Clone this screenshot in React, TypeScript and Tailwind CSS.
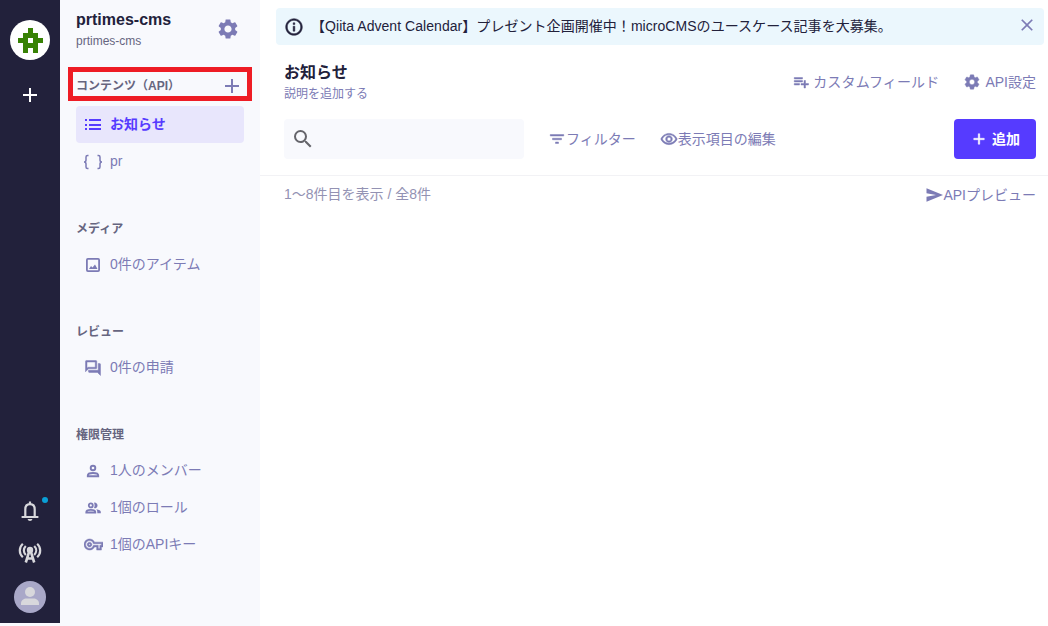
import type { ReactNode } from "react";
import type { IconType } from "react-icons";
import {
  MdAdd,
  MdClose,
  MdFilterList,
  MdInfoOutline,
  MdOutlineQuestionAnswer,
  MdOutlineRemoveRedEye,
  MdOutlineVpnKey,
  MdPlaylistAdd,
  MdSearch,
  MdSettings,
} from "react-icons/md";

type Item = { label: string; icon: ReactNode; active?: boolean };

// Material icons with a thin outline so they read a little heavier.
// Their invisible bounding path must not pick up the stroke.
const icon = (Icon: IconType, size = 18) => (
  <Icon size={size} strokeWidth={0.6} className="[&>path[fill=none]]:[stroke:none]" />
);

function ServiceLogo() {
  return (
    <svg width="26" height="26" viewBox="0 0 26 26" shapeRendering="crispEdges">
      <path
        fill="#388205"
        fillRule="evenodd"
        d="M11 1h5v5h5v5h5v5h-5v10h-5v-5h-5v5h-5v-10h-5v-5h5v-5h5zM11 11v5h5v-5z"
      />
    </svg>
  );
}

function BellIcon() {
  return (
    <svg width="18" height="20" viewBox="0 0 18 20" fill="none" stroke="currentColor" strokeWidth="2.200">
      <path d="M4.300 16V8.500C4.300 5.200 6.200 3.200 9 3.200S13.700 5.200 13.700 8.500V16" />
      <path d="M.6 16H17.400M9 .5V3.500" />
      <path d="M6.500 18h5Q11 20 9 20T6.500 18z" fill="currentColor" stroke="none" />
    </svg>
  );
}

function BroadcastIcon() {
  return (
    <svg width="24" height="22" viewBox="0 0 24 22" fill="none" stroke="currentColor">
      <path d="M4.800 1.800C.8 5.500.8 11.500 4.800 15.200M19.200 1.800C23.200 5.500 23.200 11.500 19.200 15.200" strokeWidth="2.200" />
      <path d="M7.800 4C5.200 6.600 5.200 10.400 7.800 13M16.200 4C18.800 6.600 18.800 10.400 16.200 13" strokeWidth="2.200" />
      <path d="M11.200 9.500L7.800 20.500M12.800 9.500L16.200 20.500M9 16.500h6" strokeWidth="2.600" />
      <circle cx="12" cy="8" r="3.200" fill="currentColor" stroke="none" />
    </svg>
  );
}

function AvatarIcon() {
  return (
    <svg width="32" height="32" viewBox="0 0 32 32" fill="currentColor">
      <circle cx="16" cy="11" r="5" />
      <path d="M7 24V22.500C7 19 10 17.500 12.500 17.500H19.500C22 17.500 25 19 25 22.500V24z" />
    </svg>
  );
}

function ListIcon() {
  return (
    <svg width="16" height="12" viewBox="0 0 16 12" fill="currentColor" shapeRendering="crispEdges">
      <path d="M0 0h2v2H0zM0 5h2v2H0zM0 9h2v2H0zM4 0h12v2H4zM4 5h12v2H4zM4 9h12v2H4z" />
    </svg>
  );
}

function BracesIcon() {
  return (
    <svg width="20" height="16" viewBox="0 0 20 16" fill="none" stroke="currentColor" strokeWidth="1.500">
      <path d="M5.500 1.500H4.500Q3 1.500 3 3V6Q3 8 1 8Q3 8 3 10V13Q3 14.500 4.500 14.500H5.500" />
      <path d="M14.500 1.500H15.500Q17 1.500 17 3V6Q17 8 19 8Q17 8 17 10V13Q17 14.500 15.500 14.500H14.500" />
    </svg>
  );
}

function ImageIcon() {
  return (
    <svg width="14" height="14" viewBox="0 0 14 14" fill="currentColor">
      <rect x=".9" y=".9" width="12.200" height="12.200" rx="1" fill="none" stroke="currentColor" strokeWidth="1.800" />
      <path d="M3 11L5 8L6.500 9.600L9 6.500L11.500 11z" />
    </svg>
  );
}

function MemberIcon() {
  return (
    <svg width="14" height="14" viewBox="0 0 14 14" fill="none" stroke="currentColor" strokeWidth="1.900">
      <circle cx="7" cy="4" r="2.300" />
      <path d="M1.800 12.200V11.500C1.800 9.800 4.500 9 7 9S12.200 9.800 12.200 11.500V12.200z" />
    </svg>
  );
}

function RoleIcon() {
  return (
    <svg width="16" height="14" viewBox="0 0 16 14" fill="none" stroke="currentColor" strokeWidth="1.800">
      <circle cx="5.800" cy="4.400" r="2" />
      <path d="M1.300 11.500V11C1.300 9.500 3.500 8.800 5.800 8.800S10.300 9.500 10.300 11V11.500z" />
      <path
        d="M9 1.700A2.800 2.800 0 1 1 9 7.100Q10.200 4.400 9 1.700zM11.300 8.200Q15.800 8.800 15.800 11V12.300H12.300V11Q12.300 9.300 11.300 8.200z"
        fill="currentColor"
        stroke="none"
      />
    </svg>
  );
}

function SendIcon() {
  return (
    <svg width="17" height="16" viewBox="0 0 17 16" fill="currentColor">
      <path d="M.5 1.300L17 8L.5 14.700V9.800L10 8L.5 6.200z" />
    </svg>
  );
}

const sections: { title: string; items: Item[] }[] = [
  { title: "メディア", items: [{ label: "0件のアイテム", icon: <ImageIcon /> }] },
  { title: "レビュー", items: [{ label: "0件の申請", icon: icon(MdOutlineQuestionAnswer) }] },
  {
    title: "権限管理",
    items: [
      { label: "1人のメンバー", icon: <MemberIcon /> },
      { label: "1個のロール", icon: <RoleIcon /> },
      { label: "1個のAPIキー", icon: icon(MdOutlineVpnKey, 19) },
    ],
  },
];

function Rail() {
  return (
    <aside className="flex h-[623px] w-[60px] shrink-0 flex-col items-center bg-[#22213b] pt-5 pb-[10px] text-white">
      <div className="flex size-10 items-center justify-center rounded-full bg-white">
        <ServiceLogo />
      </div>
      <MdAdd className="mt-[23px]" size={24} />
      <div className="mt-auto flex flex-col items-center text-[#d8d8dc]">
        <div className="relative">
          <BellIcon />
          <span className="absolute -top-1 -right-[9px] size-1.5 rounded-full bg-[#0a9fd6]" />
        </div>
        <div className="mt-[21px]">
          <BroadcastIcon />
        </div>
        <div className="mt-[17px] flex size-8 items-center justify-center rounded-full bg-[#a9a8c8]">
          <AvatarIcon />
        </div>
      </div>
    </aside>
  );
}

function NavItem({ label, icon, active }: Item) {
  return (
    <li
      className={`flex h-[37px] items-center rounded pl-[7px] ${
        active ? "bg-[#e8e6fc] font-bold text-[#563bff]" : "text-[#7c7bb5]"
      }`}
    >
      <span className="flex w-5 shrink-0 items-center justify-center">{icon}</span>
      <span className="ml-[7px] pb-0.5 text-sm leading-5">{label}</span>
    </li>
  );
}

function Sidebar() {
  return (
    <nav className="h-[626px] w-[200px] shrink-0 bg-[#f8f9fd] px-4">
      <div className="flex h-[66px] justify-between pt-[10px]">
        <div>
          <p className="text-base leading-5 font-bold text-[#22213b]">prtimes-cms</p>
          <p className="mt-[3px] text-xs leading-4 text-[#66657f]">prtimes-cms</p>
        </div>
        <MdSettings className="mt-[7px] mr-1" color="#7c7bb5" size={24} />
      </div>
      <div className="relative flex h-10 items-center justify-between text-[#66657f]">
        <h2 className="text-xs font-bold">コンテンツ（API）</h2>
        <MdAdd color="#7c7bb5" size={24} />
        {/* Highlight frame */}
        <div className="absolute -right-2 -left-2 top-px h-[34px] border-[5px] border-[#ee1c25]" />
      </div>
      <ul>
        <NavItem label="お知らせ" icon={<ListIcon />} active />
        <NavItem label="pr" icon={<BracesIcon />} />
      </ul>
      {sections.map((section) => (
        <section key={section.title} className="mt-8">
          <h2 className="flex h-[34px] items-center text-xs font-bold text-[#66657f]">{section.title}</h2>
          <ul>
            {section.items.map((item) => (
              <NavItem key={item.label} {...item} />
            ))}
          </ul>
        </section>
      ))}
    </nav>
  );
}

function Main() {
  return (
    <main className="flex min-w-0 flex-1 flex-col pt-2 text-sm text-[#7c7bb5]">
      <div className="mr-1 ml-4 flex h-[37px] items-center rounded bg-[#ebf7fd] pr-[7px] pl-2 text-[#22213b]">
        {icon(MdInfoOutline, 20)}
        <p className="ml-[7px] pb-0.5 tracking-[0.05px] whitespace-nowrap">
          【Qiita Advent Calendar】プレゼント企画開催中！microCMSのユースケース記事を大募集。
        </p>
        <MdClose className="mb-[3px] ml-auto" color="#7c7bb5" size={20} />
      </div>

      <div className="flex h-[74px] justify-between pt-[18px] pr-3 pl-6">
        <div>
          <h1 className="text-base leading-5 font-bold text-[#22213b]">お知らせ</h1>
          <p className="mt-[3px] text-xs leading-4">説明を追加する</p>
        </div>
        <div className="flex h-5 items-center gap-6 pt-[18px]">
          <button className="flex items-center gap-[3px]">
            {icon(MdPlaylistAdd)}
            <span className="tracking-[0.15px]">カスタムフィールド</span>
          </button>
          <button className="flex items-center gap-1">
            {icon(MdSettings)}
            API設定
          </button>
        </div>
      </div>

      <div className="flex h-[57px] items-start border-b border-[#f2f2f5] pr-3 pl-6">
        <div className="flex h-10 w-60 items-center rounded bg-[#f8f9fd] pl-[7px] text-[#65656b]">
          <MdSearch size={24} />
        </div>
        <button className="ml-6 flex h-10 items-center">
          {icon(MdFilterList)}
          フィルター
        </button>
        <button className="ml-6 flex h-10 items-center">
          {icon(MdOutlineRemoveRedEye)}
          表示項目の編集
        </button>
        <button className="ml-auto flex h-10 w-[82px] items-center justify-center gap-1 rounded bg-[#563bff] font-bold text-white">
          {icon(MdAdd)}
          追加
        </button>
      </div>

      <div className="flex items-center justify-between pt-2 pr-3 pl-6 leading-5">
        <p className="pb-0.5 text-[#9392b3]">1～8件目を表示 / 全8件</p>
        <button className="flex items-center">
          <SendIcon />
          APIプレビュー
        </button>
      </div>
    </main>
  );
}

export default function App() {
  return (
    <div className="flex h-[626px] w-[1048px] overflow-hidden bg-white font-['Liberation_Sans','Noto_Sans_CJK_JP',sans-serif]">
      <div className="shrink-0 bg-[#f8f9fd]">
        <Rail />
      </div>
      <Sidebar />
      <Main />
    </div>
  );
}
